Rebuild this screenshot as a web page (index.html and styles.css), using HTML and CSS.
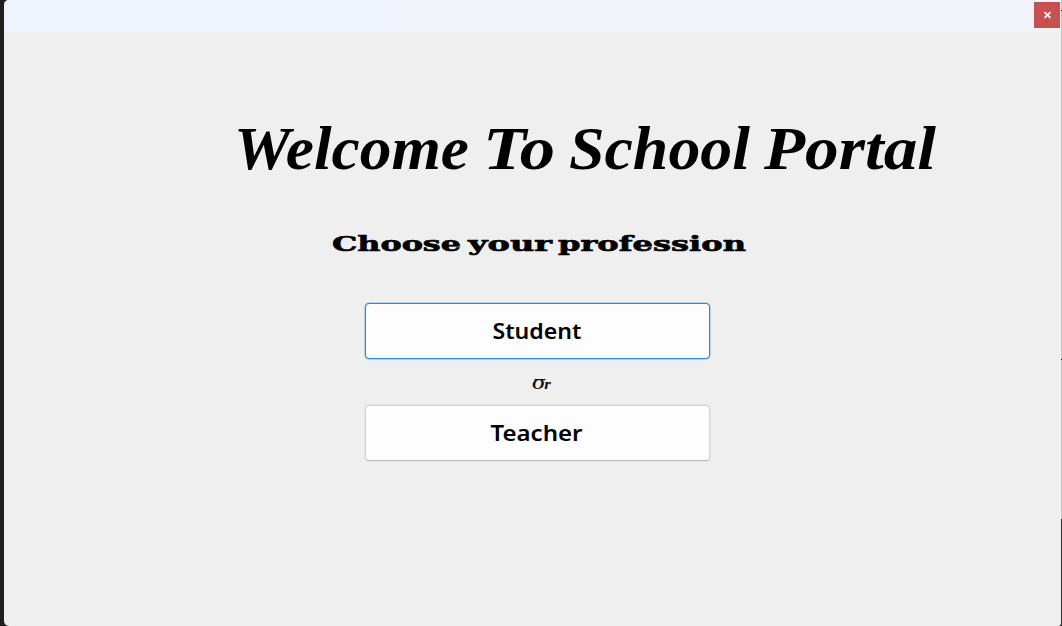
FILE: index.html
```html
<!DOCTYPE html>
<html lang="en">
<head>
<meta charset="utf-8">
<title>School Portal</title>
<link rel="stylesheet" href="styles.css">
</head>
<body>
<div class="window">
  <header class="titlebar">
    <button class="close" aria-label="Close">
      <svg width="8" height="6" viewBox="0 0 8 6"><path d="M1.5 .2 7.5 5.8M7.5 .2 1.5 5.8"/></svg>
    </button>
  </header>
  <main class="content">
    <h1 class="title">
      <svg width="720" height="64">
        <text x="-1" y="49" textLength="235" lengthAdjust="spacingAndGlyphs">Welcome</text>
        <text x="248" y="49" textLength="72" lengthAdjust="spacingAndGlyphs">To</text>
        <text x="334" y="49" textLength="181" lengthAdjust="spacingAndGlyphs">School</text>
        <text x="529" y="49" textLength="172" lengthAdjust="spacingAndGlyphs">Portal</text>
      </svg>
    </h1>
    <h2 class="subtitle">
      <svg width="430" height="32">
        <text x="1" y="21" textLength="129" lengthAdjust="spacingAndGlyphs">Choose</text>
        <text x="137" y="21" textLength="84" lengthAdjust="spacingAndGlyphs">your</text>
        <text x="227" y="21" textLength="188" lengthAdjust="spacingAndGlyphs">profession</text>
      </svg>
    </h2>
    <button class="choice focused">
      <svg width="100" height="30"><text x="4.5" y="23" textLength="89" lengthAdjust="spacingAndGlyphs">Student</text></svg>
    </button>
    <p class="or">
      <svg width="28" height="18"><text x="3" y="14" textLength="19" lengthAdjust="spacingAndGlyphs">Or</text><path d="M5.5 4.6H16.5"/></svg>
    </p>
    <button class="choice">
      <svg width="100" height="30"><text x="2.5" y="23" textLength="92" lengthAdjust="spacingAndGlyphs">Teacher</text></svg>
    </button>
  </main>
</div>
<div class="edge"><i class="mark top"></i><i class="mark middle"></i><i class="dark"></i></div>
</body>
</html>
```
FILE: styles.css
```css
* { box-sizing: border-box; }
body {
  margin: 0;
  width: 1062px;
  height: 626px;
  display: flex;
  overflow: hidden;
  background: #211f1e;
}
svg { display: block; overflow: visible; }
.window {
  width: 1057px;
  height: 626px;
  margin-left: 4px;
  border-radius: 5px 0 3px 5px;
  overflow: hidden;
  background: #efefef;
}
.titlebar {
  height: 32px;
  padding: 2px 1px 0 0;
  display: flex;
  justify-content: flex-end;
  background: linear-gradient(90deg, #eff3fc 0, #eff3fc 34%, #f1f3f9 42%, #f1f3f9 100%);
}
.close {
  width: 26px;
  height: 26px;
  padding: 0;
  border: 0;
  background: #c75050;
  display: flex;
  align-items: center;
  justify-content: center;
}
.close path { stroke: #fff; stroke-width: 1.7; fill: none; }
.content {
  display: flex;
  flex-direction: column;
  align-items: flex-start;
  padding-top: 88px;
}
.title { margin: 0 0 0 231px; }
.title text {
  font: italic bold 61px "Liberation Serif", serif;
  fill: #000;
}
.subtitle { margin: 46px 0 0 327px; }
.subtitle text {
  font: bold 19.5px "DejaVu Serif", serif;
  fill: #000;
  stroke: #000;
  stroke-width: .6px;
}
.choice {
  width: 345px;
  height: 56px;
  margin-left: 361px;
  padding: 0;
  border: 1px solid #d2d2d2;
  border-bottom-color: #bbb;
  border-radius: 4px;
  box-shadow: 0 0 0 .5px #dedede;
  background: #fdfdfd;
  display: flex;
  align-items: center;
  justify-content: center;
}
.subtitle + .choice { margin-top: 41px; }
.focused { border-color: #2f8ad0; box-shadow: 0 0 0 .5px #7db5e0; }
.choice text {
  font: 600 22px "Noto Sans", sans-serif;
  fill: #000;
}
.or { margin: 16px 0 12px 525px; }
.or text {
  font: italic bold 14px "Liberation Serif", serif;
  fill: #111;
}
.or path { stroke: #111; stroke-width: 1.2; fill: none; }
.edge {
  width: 1px;
  height: 626px;
  display: flex;
  flex-direction: column;
  background: #c6c6c6;
}
.mark { height: 1px; background: #111; }
.top { margin-top: 10px; }
.middle { margin-top: 348px; }
.dark { margin-top: 159px; flex: 1; background: #2b2b2b; }
```
